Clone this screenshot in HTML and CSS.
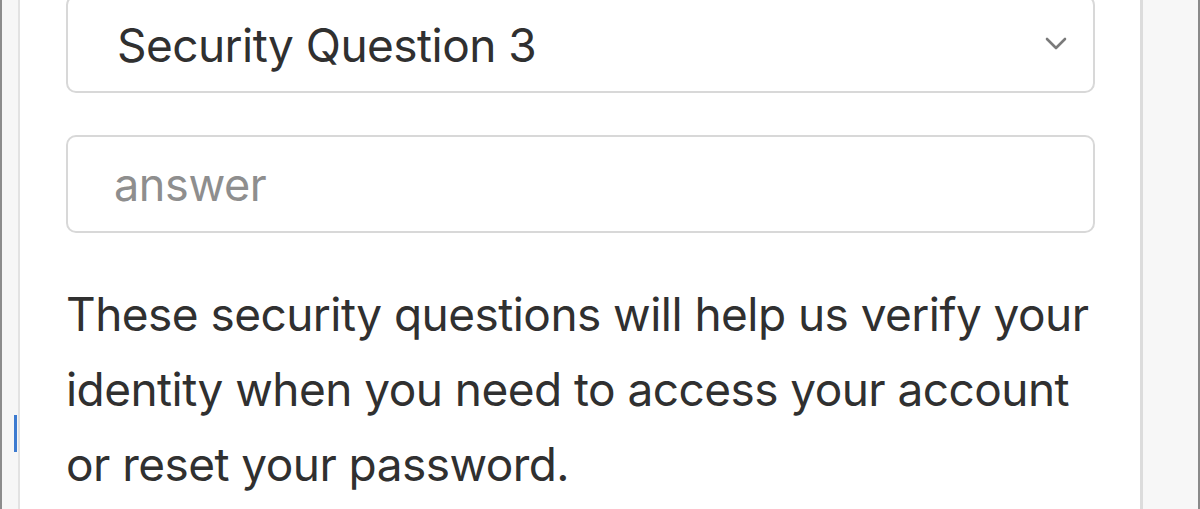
FILE: index.html
```html
<!DOCTYPE html>
<html lang="en">
<head>
<meta charset="utf-8">
<title>Security Questions</title>
<link rel="stylesheet" href="styles.css">
</head>
<body>
<div class="frame">
  <div class="rail-left"><span class="caret"></span></div>
  <main class="panel">
    <div class="field select">
      <span class="value">Security Question 3</span>
      <svg class="chevron" width="22" height="14" viewBox="0 0 22 14"><path d="M2 2 L11 11 L20 2" fill="none" stroke="#7a7a7a" stroke-width="2.6" stroke-linecap="round" stroke-linejoin="round"/></svg>
    </div>
    <div class="field input">
      <span class="placeholder">answer</span>
    </div>
    <p class="help">These security questions will help us verify your identity when you need to access your account or reset your password.</p>
  </main>
  <div class="rail-right"></div>
</div>
</body>
</html>
```
FILE: styles.css
```css
html, body {
  margin: 0;
  padding: 0;
  height: 100%;
  overflow: hidden;
  background: #ffffff;
}
.frame {
  display: flex;
  height: 509px;
  font-family: Inter, "Liberation Sans", sans-serif;
}
.rail-left {
  width: 16px;
  background: #f6f6f6;
  border-left: 2px solid #8c8c8c;
  border-right: 2px solid #e2e2e2;
  position: relative;
}
.caret {
  position: absolute;
  left: 12px;
  top: 415px;
  width: 3px;
  height: 37px;
  background: #3d7bd0;
}
.panel {
  flex: 1;
  padding: 0 45px 0 46px;
  display: flex;
  flex-direction: column;
  margin-top: -5px;
}
.rail-right {
  width: 55px;
  background: #f7f7f7;
  border-left: 3px solid #dcdcdc;
  border-right: 2px solid #8a8a8a;
}
.field {
  height: 94px;
  border: 2px solid #d8d8d8;
  border-radius: 10px;
  display: flex;
  align-items: center;
  box-sizing: content-box;
}
.select {
  padding: 1px 26px 0 49px;
  height: 93px;
  justify-content: space-between;
}
.select .chevron {
  margin-top: -2px;
}
.input {
  margin-top: 42px;
  padding: 0 46px;
}
.value {
  font-size: 46px;
  color: #303030;
  letter-spacing: -0.55px;
}
.placeholder {
  font-size: 45px;
  color: #8e8e8e;
  letter-spacing: -0.4px;
}
.chevron {
  display: block;
}
.help {
  margin: 44px 0 0;
  font-size: 46px;
  line-height: 75px;
  color: #303030;
  letter-spacing: -0.55px;
}
```
